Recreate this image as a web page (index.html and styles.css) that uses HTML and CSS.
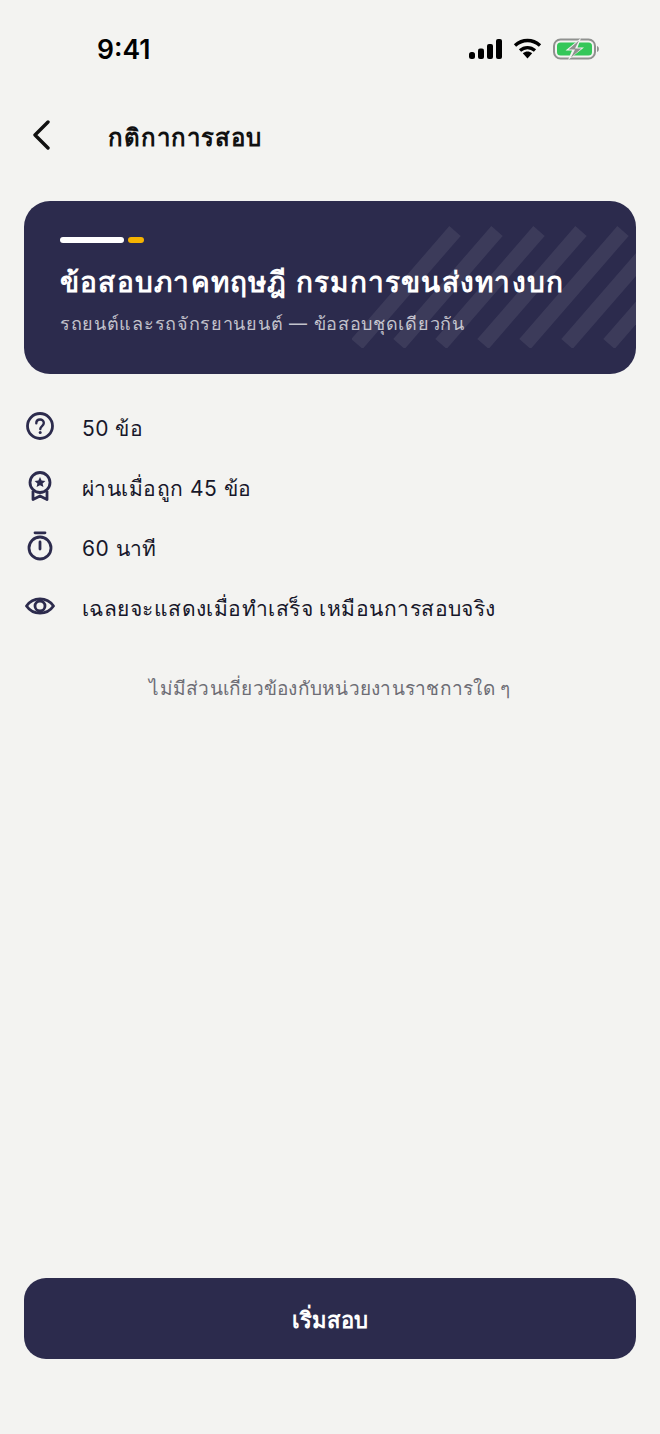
FILE: index.html
```html
<!DOCTYPE html>
<html lang="th">
<head>
<meta charset="utf-8">
<title>กติกาการสอบ</title>
<link rel="stylesheet" href="styles.css">
</head>
<body>
<div class="screen">
  <div class="status">
    <span class="time">9:41</span>
    <div class="status-icons">
      <svg width="34" height="20" viewBox="0 0 34 20"><rect x="0" y="13" width="6" height="7" rx="2.5" fill="#000"/><rect x="9" y="9.5" width="6" height="10.5" rx="2" fill="#000"/><rect x="18" y="5" width="6" height="15" rx="2" fill="#000"/><rect x="27" y="0" width="6" height="20" rx="2" fill="#000"/></svg>
      <svg class="wifi" width="29" height="21" viewBox="0 0 29 21"><path d="M2 7.500C9.500 .8 19.500 .8 27 7.500" fill="none" stroke="#000" stroke-width="3.400"/><path d="M7 12.500C11.500 8.600 17.500 8.600 22 12.500" fill="none" stroke="#000" stroke-width="3.400"/><path d="M9.800 15.200C12.800 12.800 16.200 12.800 19.200 15.200L14.500 20.600Z" fill="#000"/></svg>
      <svg class="battery" width="47" height="22" viewBox="0 0 47 22"><rect x="1" y="1.500" width="41" height="19" rx="6.500" fill="none" stroke="#8f918f" stroke-width="2"/><rect x="4" y="4.500" width="35" height="13" rx="3.500" fill="#34c759"/><path d="M44 8c2.500.6 2.500 5.400 0 6z" fill="#8f918f"/><path d="M28 0 12.500 12.500H19L15 22 31 9.500h-6.500z" fill="#f3f3f1"/><path d="M26 2.500 15.500 11.500H22L18 19.500 28.500 10.500H22z" fill="#8f918f"/></svg>
    </div>
  </div>
  <header class="nav">
    <svg class="back" width="20" height="30" viewBox="0 0 20 30"><path d="M17 2 4 15l13 13" fill="none" stroke="#111" stroke-width="3.400" stroke-linecap="round" stroke-linejoin="round"/></svg>
    <h1 class="nav-title">กติกาการสอบ</h1>
  </header>
  <section class="hero">
    <svg class="hero-stripes" width="284" height="122" viewBox="0 0 284 122" aria-hidden="true">
      <g stroke="#fff" stroke-opacity=".08" stroke-width="15">
        <path d="M5 118 103 5"/><path d="M47 118 145 5"/><path d="M89 118 187 5"/><path d="M131 118 229 5"/><path d="M173 118 271 5"/><path d="M215 118 313 5"/><path d="M257 118 355 5"/>
      </g>
    </svg>
    <div class="accent"><span class="accent-white"></span><span class="accent-yellow"></span></div>
    <h2 class="hero-title">ข้อสอบภาคทฤษฎี กรมการขนส่งทางบก</h2>
    <p class="hero-sub">รถยนต์และรถจักรยานยนต์ — ข้อสอบชุดเดียวกัน</p>
  </section>
  <ul class="rules">
    <li class="rule">
      <svg class="rule-icon" width="30" height="30" viewBox="0 0 30 30"><circle cx="15" cy="15" r="12.500" fill="none" stroke="#2c2b4d" stroke-width="2.800"/><path d="M11.300 12.300c0-5 7.500-5 7.500-.2 0 3-3.500 3-3.500 6" fill="none" stroke="#2c2b4d" stroke-width="2.400" stroke-linecap="round"/><circle cx="15.200" cy="21.500" r="1.500" fill="#2c2b4d"/></svg>
      <span>50 ข้อ</span>
    </li>
    <li class="rule">
      <svg class="rule-icon" width="30" height="30" viewBox="0 0 30 30"><circle cx="15" cy="11.500" r="10" fill="none" stroke="#2c2b4d" stroke-width="2.800"/><path d="M15 6l1.600 3.500 3.800.4-2.800 2.500.8 3.700-3.400-1.900-3.400 1.900.8-3.700-2.800-2.500 3.800-.4z" fill="#2c2b4d"/><path d="M8 20v8.500l7-3.500 7 3.500V20" fill="none" stroke="#2c2b4d" stroke-width="2.800" stroke-linejoin="round"/></svg>
      <span>ผ่านเมื่อถูก 45 ข้อ</span>
    </li>
    <li class="rule">
      <svg class="rule-icon" width="30" height="30" viewBox="0 0 30 30"><circle cx="15" cy="17" r="11" fill="none" stroke="#2c2b4d" stroke-width="2.800"/><path d="M10 1.800h10M15 11v7" fill="none" stroke="#2c2b4d" stroke-width="2.800" stroke-linecap="round"/></svg>
      <span>60 นาที</span>
    </li>
    <li class="rule">
      <svg class="rule-icon" width="30" height="30" viewBox="0 0 30 30"><path d="M1.500 15C8 5.500 22 5.500 28.500 15 22 24.500 8 24.500 1.500 15Z" fill="none" stroke="#2c2b4d" stroke-width="2.800" stroke-linejoin="round"/><circle cx="15" cy="15" r="5" fill="none" stroke="#2c2b4d" stroke-width="2.800"/></svg>
      <span>เฉลยจะแสดงเมื่อทำเสร็จ เหมือนการสอบจริง</span>
    </li>
  </ul>
  <p class="note">ไม่มีส่วนเกี่ยวข้องกับหน่วยงานราชการใด ๆ</p>
  <button class="start" type="button">เริ่มสอบ</button>
</div>
</body>
</html>
```
FILE: styles.css
```css
* { box-sizing: border-box; }
html, body { margin: 0; padding: 0; }
body { background: #f3f3f1; font-family: Inter, "Noto Sans", "Liberation Sans", sans-serif; color: #111; }
.screen { width: 660px; height: 1434px; display: flex; flex-direction: column; padding: 0 24px; overflow: hidden; }
.status { height: 96px; flex: none; display: flex; justify-content: space-between; align-items: flex-start; padding: 32px 36px 0 73px; }
.time { font-family: Inter, "Liberation Sans", sans-serif; font-size: 26.500px; font-weight: 600; line-height: 34px; color: #000; }
.status-icons { display: flex; align-items: center; gap: 11px; padding-top: 6px; }
.wifi { margin-left: -1px; margin-top: -2px; }
.nav { height: 80px; flex: none; display: flex; align-items: center; }
.back { flex: none; margin-left: 7px; margin-top: -2px; }
.nav-title { margin: 3px 0 0 57px; font-size: 24px; font-weight: 600; line-height: 36px; color: #111; letter-spacing: 1px; }
.hero { position: relative; margin-top: 25px; height: 173px; flex: none; border-radius: 26px; background: #2c2b4d; padding: 36px 36px 0; overflow: hidden; }
.hero-stripes { position: absolute; left: 328px; top: 25px; }
.accent { position: relative; display: flex; gap: 4px; height: 6px; }
.accent-white { width: 64px; background: #fff; border-radius: 3px; }
.accent-yellow { width: 16px; background: #f5b301; border-radius: 3px; }
.hero-title { position: relative; margin: 17px 0 0; font-size: 28px; font-weight: 600; line-height: 44px; color: #fff; white-space: nowrap; letter-spacing: 1.220px; }
.hero-sub { position: relative; margin: 7px 0 0; font-size: 18px; line-height: 26px; color: rgba(255,255,255,.72); white-space: nowrap; letter-spacing: .7px; }
.rules { list-style: none; margin: 34px 0 0; padding: 0; display: flex; flex-direction: column; gap: 20px; }
.rule { display: flex; align-items: center; height: 40px; gap: 27px; font-size: 21px; color: #17172a; letter-spacing: .45px; }
.rule-icon { flex: none; margin-top: -4px; margin-left: 1px; }
.note { margin: 46px 0 0; text-align: center; font-size: 19px; line-height: 30px; color: #6d6d75; letter-spacing: .25px; }
.start { margin-top: auto; margin-bottom: 75px; height: 81px; flex: none; border: 0; border-radius: 22px; background: #2c2b4d; color: #fff; font-family: inherit; font-size: 22px; font-weight: 600; padding-top: 5px; letter-spacing: .2px; }
```
